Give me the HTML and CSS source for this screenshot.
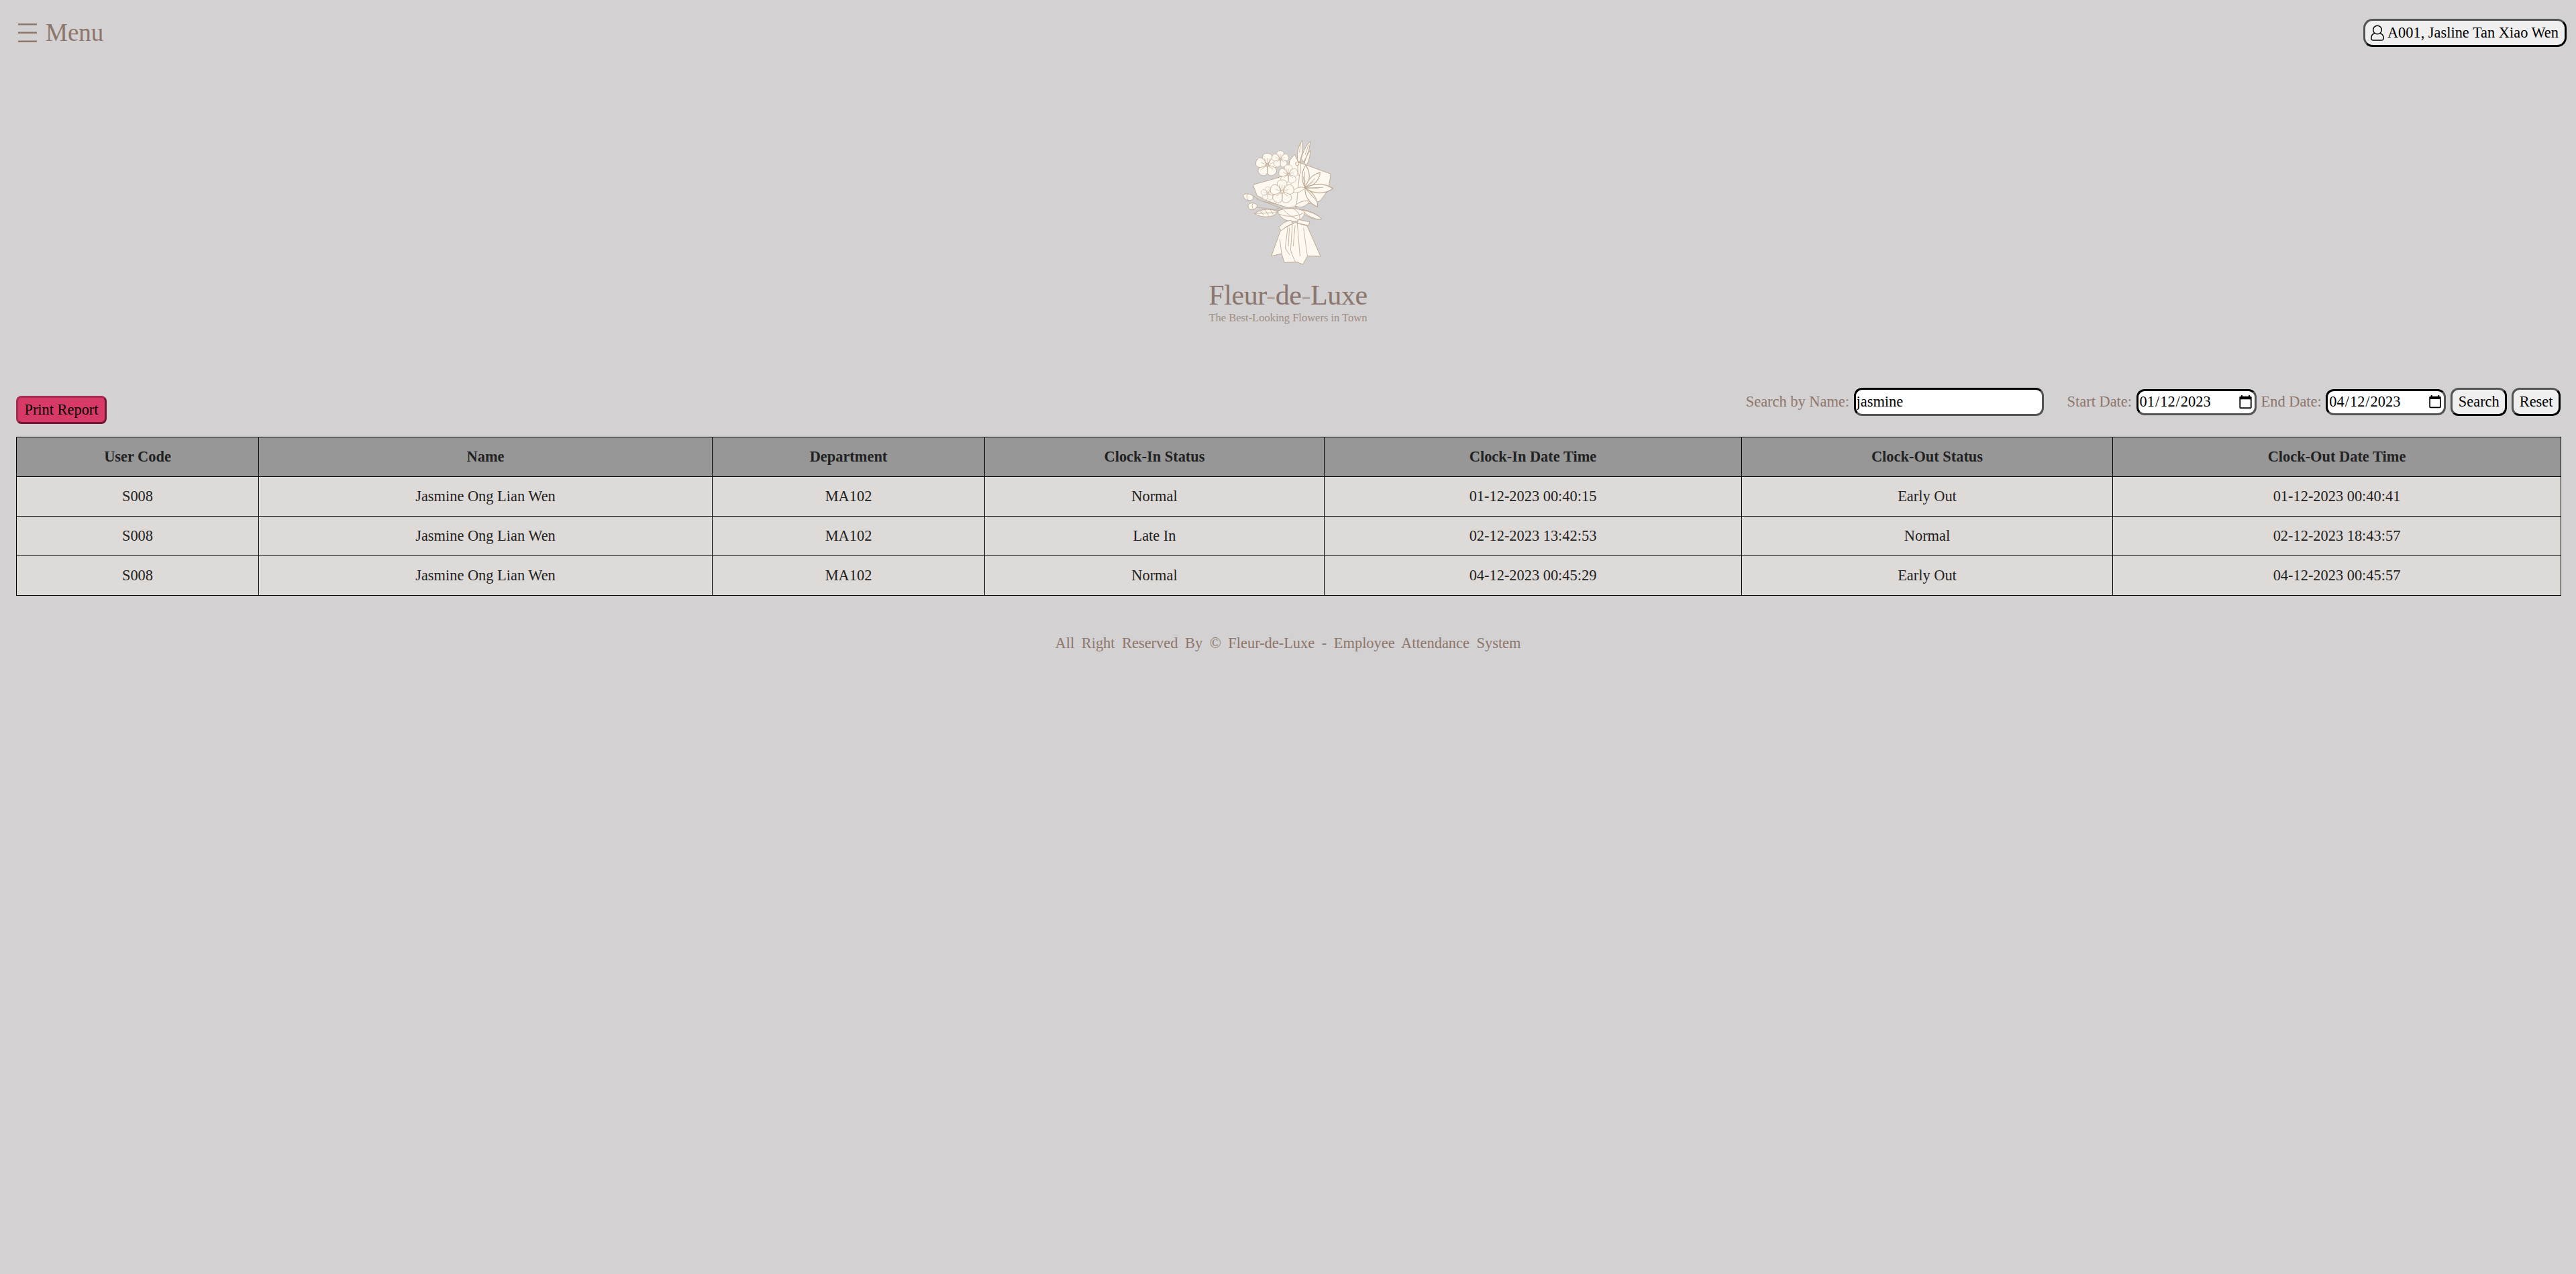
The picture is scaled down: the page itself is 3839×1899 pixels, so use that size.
FILE: index.html
```html
<!DOCTYPE html>
<html lang="en-GB">
<head>
<meta charset="utf-8">
<title>Fleur-de-Luxe - Employee Attendance System</title>
<link rel="stylesheet" href="styles.css">
</head>
<body>
<header class="topbar">
  <div class="menu">
    <svg class="menu-icon" viewBox="0 0 28 28"><rect x="0" y="0" width="28" height="2.5"/><rect x="0" y="12.5" width="28" height="2.5"/><rect x="0" y="25.5" width="28" height="2.5"/></svg>
    <span>Menu</span>
  </div>
  <button class="user" type="button">
    <svg class="user-icon" viewBox="0 0 20 24"><circle cx="10" cy="7.5" r="6.3"/><path d="M6 12.5C3 13.5 1 16 .9 19.5 .8 22 2 23 4 23H16C18 23 19.2 22 19.1 19.5 19 16 17 13.5 14 12.5"/></svg>
    <span>A001, Jasline Tan Xiao Wen</span>
  </button>
</header>

<section class="logo">
  <svg class="bouquet" viewBox="0 0 570 630">
    <defs>
      <g id="flower">
        <path id="petal" class="pt" d="M0 -6C-22 -20 -34 -42 -22 -58-12 -68 10 -68 22 -58 34 -42 22 -20 0 -6Z"/>
        <use href="#petal" transform="rotate(72)"/>
        <use href="#petal" transform="rotate(144)"/>
        <use href="#petal" transform="rotate(216)"/>
        <use href="#petal" transform="rotate(288)"/>
        <path class="vein" d="M0 -6V-38M-6 -10L-16 -36M6 -10L16 -36M6 -2L34 -14M5 5L30 22M0 7V36M-5 5L-30 22M-6 -2L-34 -14"/>
      </g>
      <path id="lp" class="pt" d="M0 0C-18 -30 -22 -62 -6 -92 14 -70 22 -32 0 0Z"/>
    </defs>
    <!-- paper -->
    <path class="pt" d="M305 118L328 90 345 125 490 178 478 252 440 300 300 330 210 300 160 275 142 226 235 200 300 180Z"/>
    <!-- wrap -->
    <path class="pt" d="M266 428L224 545 270 534 282 574 338 572 365 582 386 545 444 546 384 410 330 395Z"/>
    <path class="vein" d="M298 410L286 510 306 540M318 405L310 520 330 570M340 400L352 545M262 470L270 534M368 420L385 545M305 420L300 500M330 410L322 500"/>
    <!-- grass -->
    <path class="pt" d="M342 120C336 80 346 50 362 28 368 60 362 95 350 125Z"/>
    <path class="pt" d="M358 110C366 75 380 50 398 32 396 65 385 95 368 125Z"/>
    <path class="pt" d="M372 130C378 105 386 88 398 72 398 100 392 120 380 140Z"/>
    <path class="vein" d="M345 185C342 160 340 140 344 128M355 120V175M350 80L355 40M376 90L390 48"/>
    <circle class="pt" cx="340" cy="132" r="8"/>
    <!-- stems -->
    <path class="vein" d="M160 290L320 350M150 325L290 345M350 180L335 330M250 330L345 365M185 300L240 312"/>
    <!-- buds -->
    <path class="pt" d="M98 275C105 264 122 264 140 274 146 284 142 296 128 296 112 296 102 290 98 275Z"/>
    <path class="vein" d="M118 268C112 278 114 290 122 296M140 274L165 290"/>
    <path class="pt" d="M120 318C128 304 148 304 162 318 158 332 144 340 132 338 124 336 120 328 120 318Z"/>
    <path class="vein" d="M142 308C136 318 138 330 144 336"/>
    <!-- leaves -->
    <path class="pt" d="M148 355C175 335 225 328 252 348 240 372 185 378 148 355Z"/>
    <path class="vein" d="M150 355L250 350M175 345L190 362M195 338L212 364M218 336L232 358"/>
    <path class="pt" d="M352 336C390 340 430 355 448 380 420 385 375 370 352 336Z"/>
    <path class="pt" d="M330 320C350 300 375 295 395 300 385 320 355 335 330 320Z"/>
    <!-- flowers -->
    <use href="#flower" transform="translate(206 138) scale(.8)"/>
    <use href="#flower" transform="translate(264 112) scale(.58)"/>
    <use href="#flower" transform="translate(300 180) scale(.66)"/>
    <use href="#flower" transform="translate(208 266) scale(.46)"/>
    <!-- lily -->
    <g transform="translate(375 240)">
      <use href="#lp" transform="rotate(5) scale(1.1)"/>
      <use href="#lp" transform="rotate(48) scale(1.05)"/>
      <use href="#lp" transform="rotate(95) scale(1.35)"/>
      <use href="#lp" transform="rotate(150) scale(1.1)"/>
      <use href="#lp" transform="rotate(-105) scale(.7)"/>
      <path class="vein" d="M0 0L-8 -50M0 0L-2 -70M0 0L36 -28M0 0L44 -42M0 0L60 4M0 0L80 -2M0 0L36 42M0 0L48 56"/>
    </g>
    <use href="#flower" transform="translate(272 258) scale(.82)"/>
    <!-- knot and bow -->
    <path class="pt" d="M252 345C285 325 340 330 375 345 370 375 350 392 315 390 285 388 262 372 252 345Z"/>
    <path class="vein" d="M262 358C295 372 340 370 368 352M280 340C300 365 335 378 352 385M320 332C345 345 355 362 350 385"/>
    <path class="pt" d="M258 418C272 398 295 386 312 385L320 400C300 408 282 418 268 432Z"/>
    <path class="pt" d="M345 382L396 392 390 408 340 398Z"/>
    <path class="pt" d="M365 340C395 345 435 362 447 378 440 386 415 378 385 362Z"/>
  </svg>
  <div class="brand">Fleur<span class="dash">-</span>de<span class="dash">-</span>Luxe</div>
  <div class="tagline">The Best-Looking Flowers in Town</div>
</section>

<section class="toolbar">
  <button class="print" type="button">Print Report</button>
  <form class="filters">
    <label class="field field-search">Search by Name: <input class="text-input" type="text" value="jasmine"></label>
    <label class="field">Start Date: <input class="date-input" type="date" value="2023-01-12"></label>
    <label class="field">End Date: <input class="date-input" type="date" value="2023-04-12"></label>
    <button class="action" type="button">Search</button>
    <button class="action" type="button">Reset</button>
  </form>
</section>

<main class="table-wrap">
  <table class="report">
    <colgroup>
      <col class="c1"><col class="c2"><col class="c3"><col class="c4"><col class="c5"><col class="c6"><col class="c7">
    </colgroup>
    <thead>
      <tr><th>User Code</th><th>Name</th><th>Department</th><th>Clock-In Status</th><th>Clock-In Date Time</th><th>Clock-Out Status</th><th>Clock-Out Date Time</th></tr>
    </thead>
    <tbody>
      <tr><td>S008</td><td>Jasmine Ong Lian Wen</td><td>MA102</td><td>Normal</td><td>01-12-2023 00:40:15</td><td>Early Out</td><td>01-12-2023 00:40:41</td></tr>
      <tr><td>S008</td><td>Jasmine Ong Lian Wen</td><td>MA102</td><td>Late In</td><td>02-12-2023 13:42:53</td><td>Normal</td><td>02-12-2023 18:43:57</td></tr>
      <tr><td>S008</td><td>Jasmine Ong Lian Wen</td><td>MA102</td><td>Normal</td><td>04-12-2023 00:45:29</td><td>Early Out</td><td>04-12-2023 00:45:57</td></tr>
    </tbody>
  </table>
</main>

<footer class="footer">All Right Reserved By © Fleur-de-Luxe - Employee Attendance System</footer>
</body>
</html>
```
FILE: styles.css
```css
* { box-sizing: border-box; }
html, body { margin: 0; height: 100%; }
body {
  background: #d3d1d2;
  color: #8d766a;
  font-family: "Liberation Serif", "Times New Roman", serif;
  font-size: 22.4px;
  overflow: hidden;
}
button, input { font-family: inherit; font-size: 22.4px; color: #000; }

.topbar { display: flex; justify-content: space-between; align-items: flex-start; padding: 28px 14px 0 24px; }
.menu { display: flex; align-items: center; gap: 13px; font-size: 37px; line-height: 42px; padding-left: 3px; }
.menu-icon { width: 28px; height: 28px; fill: #8d766a; }
.user {
  display: flex; align-items: center; gap: 5px;
  height: 42px; padding: 0 9px 0 8px;
  background: #efefef; border: 3px outset #000; border-radius: 14px;
}
.user-icon { width: 20px; height: 24px; fill: none; stroke: #000; stroke-width: 1.5; }

.logo { display: flex; flex-direction: column; align-items: center; margin-top: 130px; }
.bouquet { width: 190px; height: 210px; display: block; margin-right: 9px; filter: blur(.4px); }
.pt { fill: #fdf8f0; stroke: #bda893; stroke-width: 3; stroke-linejoin: round; }
.vein { fill: none; stroke: #bda893; stroke-width: 2.5; stroke-linecap: round; }
.brand { font-size: 42px; line-height: 44px; letter-spacing: -.4px; margin-top: 8px; color: #8b776d; }
.dash { color: #b3a59d; }
.tagline { font-size: 16.5px; line-height: 18px; margin-top: 3px; color: #a08e84; }

.toolbar { display: flex; justify-content: space-between; align-items: flex-start; padding: 0 23px 0 24px; margin-top: 95px; }
.print {
  height: 42px; width: 135px; padding: 0; margin-top: 12px;
  background: #d83a68; border: 3px solid; border-color: #a62c52 #731733 #731733 #a62c52; border-radius: 8px;
}
.filters { display: flex; align-items: center; gap: 7px; }
.field { display: flex; align-items: center; gap: 1px; white-space: pre; }
.field-search { margin-right: 28px; }
.text-input, .date-input { background: #fff; border: 3px inset #000; border-radius: 12px; padding: 0 1px; }
.text-input { width: 283px; height: 42px; }
.date-input { width: 179px; height: 39px; padding-right: 0; }
.action { height: 42px; padding: 0 8.5px; background: #efefef; border: 3px outset #000; border-radius: 12px; }

.table-wrap { padding: 0 23px 0 24px; margin-top: 19px; }
.report { width: 100%; table-layout: fixed; border-collapse: collapse; color: #222; }
.report th, .report td { border: 1px solid #000; text-align: center; padding: 0; }
.report th { height: 59px; background: #979797; font-weight: bold; }
.report td { height: 59px; background: #dedad7; }
.c1 { width: 361px; } .c2 { width: 676px; } .c3 { width: 406px; } .c4 { width: 506px; }
.c5 { width: 622px; } .c6 { width: 553px; } .c7 { width: 668px; }

.footer { text-align: center; word-spacing: 5px; margin-top: 58px; }
```
